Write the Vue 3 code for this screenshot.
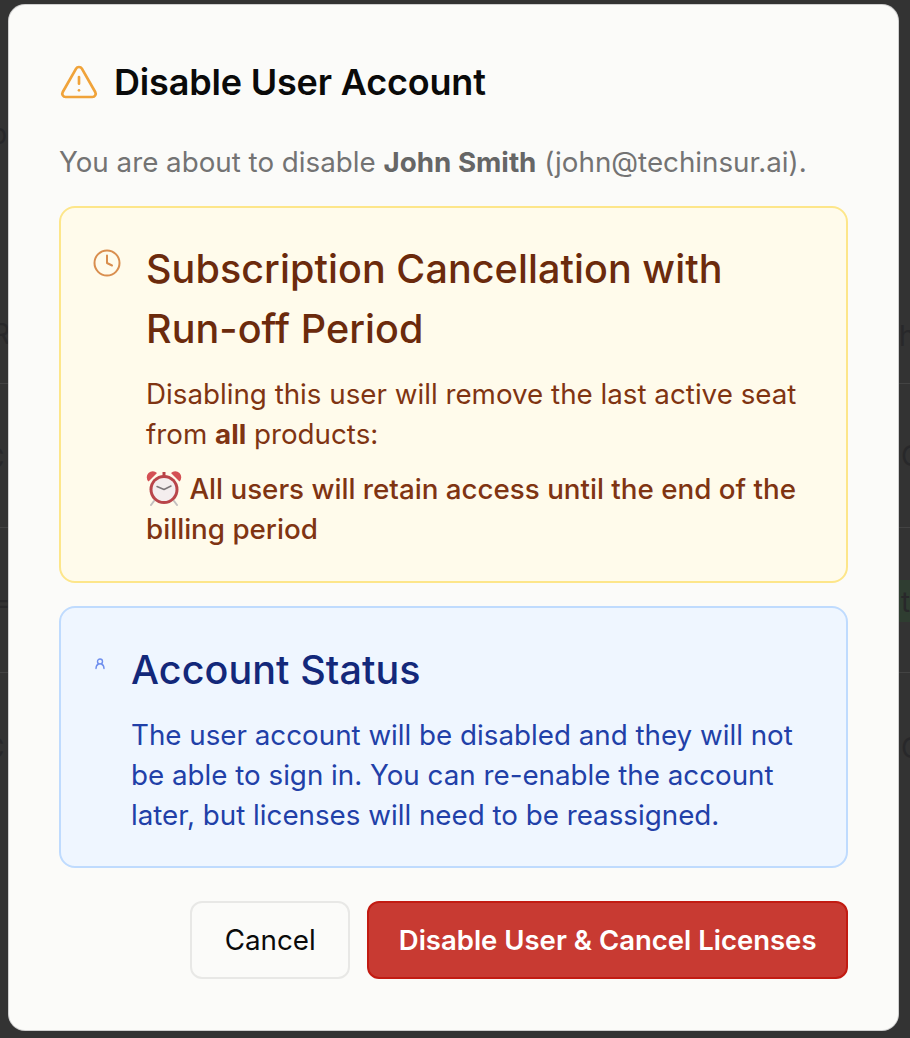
<script setup>
// static dialog, nothing to wire up
</script>

<template>
	<div class="page">
		<div class="backdrop">
			<span class="ghost ghost-b">b</span>
			<span class="ghost ghost-r">R</span>
			<span class="ghost ghost-h">h</span>
			<span class="ghost ghost-c1">C</span>
			<span class="ghost ghost-c2">C</span>
			<span class="ghost ghost-l1">C</span>
			<span class="ghost ghost-l2">C</span>
			<span class="ghost ghost-eq">=</span>
			<div class="ghost-line line-1"></div>
			<div class="ghost-line line-2"></div>
			<div class="ghost-line line-3"></div>
			<div class="ghost-pill"><span class="ghost-t">t</span></div>
		</div>

		<section class="dialog">
			<header class="dialog-header">
				<svg class="warn-icon" viewBox="0 0 24 24" fill="none" stroke="currentColor" stroke-width="1.6" stroke-linecap="round" stroke-linejoin="round">
					<path d="M21.73 18l-8-14a2 2 0 0 0-3.48 0l-8 14A2 2 0 0 0 4 21h16a2 2 0 0 0 1.73-3Z" />
					<path d="M12 9v4" />
					<path d="M12 17h.01" />
				</svg>
				<h2>Disable User Account</h2>
			</header>

			<p class="intro">You are about to disable <strong>John Smith</strong> (john@techinsur.ai).</p>

			<div class="notice notice-amber">
				<svg class="clock-icon" viewBox="0 0 24 24" fill="none" stroke="currentColor" stroke-width="1.6" stroke-linecap="round" stroke-linejoin="round">
					<circle cx="12" cy="12" r="10" />
					<path d="M12 6v6l4 2" />
				</svg>
				<div class="notice-body">
					<h3>Subscription Cancellation with Run-off Period</h3>
					<p class="notice-lead">Disabling this user will remove the last active seat from <strong>all</strong> products:</p>
					<p class="notice-text">
						<svg class="alarm" viewBox="0 0 36 36">
							<path d="M8 31l-3 4M28 31l3 4" stroke="#c4c0c0" stroke-width="2" stroke-linecap="round" fill="none" />
							<path d="M2.500 11.500a6 6 0 0 1 8.500-8.500zM33.500 11.500a6 6 0 0 0-8.500-8.500z" fill="#d45054" />
							<path d="M16.500 2h3v4h-3z" fill="#b94044" />
							<circle cx="18" cy="19.500" r="14.500" fill="#b9454a" />
							<circle cx="18" cy="19.500" r="11.500" fill="#f4eeee" />
							<path d="M18 19.500l-7-3M18 19.500l7-3.500" stroke="#7d777a" stroke-width="1.500" stroke-linecap="round" fill="none" />
						</svg>
						All users will retain access until the end of the billing period
					</p>
				</div>
			</div>

			<div class="notice notice-blue">
				<svg class="user-icon" viewBox="0 0 24 24" fill="none" stroke="currentColor" stroke-width="2.800" stroke-linecap="round" stroke-linejoin="round">
					<circle cx="12" cy="8" r="5" />
					<path d="M4 22c0-5 3-8 5-9M20 22c0-5-3-8-5-9" />
				</svg>
				<div class="notice-body">
					<h3>Account Status</h3>
					<p class="notice-lead">The user account will be disabled and they will not be able to sign in. You can re-enable the account later, but licenses will need to be reassigned.</p>
				</div>
			</div>

			<footer class="dialog-actions">
				<button class="btn btn-cancel">Cancel</button>
				<button class="btn btn-danger">Disable User &amp; Cancel Licenses</button>
			</footer>
		</section>
	</div>
</template>

<style>
html,
body {
	margin: 0;
	background: #333333;
}
</style>

<style scoped>
.page {
	position: relative;
	width: 910px;
	height: 1038px;
	padding: 5px 12px 8px 9px;
	box-sizing: border-box;
	overflow: hidden;
	background: #333333;
	font-family: Inter, "Liberation Sans", sans-serif;
}

.backdrop {
	position: absolute;
	inset: 0;
	color: #28282a;
}

.ghost {
	position: absolute;
	font-size: 28px;
	line-height: 32px;
}

.ghost-b { left: -10px; top: 118px; }
.ghost-r { left: -8px; top: 318px; }
.ghost-h { left: 899px; top: 320px; }
.ghost-c1 { left: 901px; top: 440px; }
.ghost-c2 { left: 901px; top: 732px; }
.ghost-l1 { left: -16px; top: 442px; }
.ghost-l2 { left: -16px; top: 732px; }
.ghost-eq { left: -8px; top: 586px; }

.ghost-line {
	position: absolute;
	left: 0;
	right: 0;
	height: 1px;
	background: #434343;
}

.line-1 { top: 383px; }
.line-2 { top: 527px; }
.line-3 { top: 672px; }

.ghost-pill {
	position: absolute;
	left: 899px;
	top: 580px;
	width: 11px;
	height: 42px;
	background: #2f3d31;
}

.ghost-t {
	position: absolute;
	left: 2px;
	top: 6px;
	font-size: 28px;
	line-height: 32px;
}

.dialog {
	position: relative;
	height: 100%;
	padding: 54px 50px 0;
	box-sizing: border-box;
	background: #fbfbf9;
	border-radius: 16px;
	box-shadow: 0 0 0 1px #cfcfcf;
}

.dialog-header {
	display: flex;
	align-items: center;
	gap: 15px;
	height: 46px;
}

.warn-icon {
	width: 40px;
	height: 40px;
	color: #f0a33a;
	flex-shrink: 0;
}

.dialog-header h2 {
	margin: 0;
	font-size: 36px;
	letter-spacing: -0.18px;
	font-weight: 600;
	color: #0a0a0a;
}

.intro {
	margin: 37px 0 24px;
	font-size: 27.75px;
	line-height: 40px;
	color: #737373;
}

.intro strong {
	color: #666666;
	font-weight: 700;
}

.notice {
	display: flex;
	border-radius: 16px;
	border: 2px solid;
	box-sizing: border-box;
}

.notice-amber {
	height: 377px;
	padding: 31px 32px 0;
	gap: 24px;
	background: #fffbeb;
	border-color: #fde68a;
	color: #7f3412;
}

.notice-blue {
	height: 262px;
	margin-top: 23px;
	padding: 32px 32px 0;
	gap: 21px;
	background: #eff6ff;
	border-color: #bfdbfe;
	color: #2140a8;
}

.clock-icon {
	width: 30px;
	height: 30px;
	margin: 9px 0 0 -1px;
	flex-shrink: 0;
	color: #d98e4e;
}

.user-icon {
	width: 12px;
	height: 15px;
	margin: 16px 4px 0 1px;
	flex-shrink: 0;
	color: #6f8fee;
}

.notice-body {
	flex: 1;
	min-width: 0;
}

.notice h3 {
	margin: 0 0 15px;
	font-size: 39.5px;
	letter-spacing: 0.07px;
	line-height: 60px;
	font-weight: 500;
}

.notice-amber h3 {
	color: #6b2a0c;
}

.notice-blue h3 {
	color: #13287a;
}

.notice-lead,
.notice-text {
	margin: 0;
	font-size: 27.75px;
	line-height: 40px;
}

.notice-text {
	font-weight: 500;
}

.notice-lead {
	margin-bottom: 15px;
}

.notice-lead strong {
	font-weight: 700;
}

.alarm {
	width: 36px;
	height: 36px;
	vertical-align: -7px;
}

.dialog-actions {
	display: flex;
	justify-content: flex-end;
	gap: 17px;
	margin-top: 33px;
}

.btn {
	height: 78px;
	box-sizing: border-box;
	border-radius: 12px;
	font-family: inherit;
}

.btn-cancel {
	padding: 0 32.5px;
	border: 2px solid #e8e8e6;
	background: #fbfbf9;
	color: #0a0a0a;
	font-size: 27.75px;
	font-weight: 400;
}

.btn-danger {
	padding: 0 29.5px;
	border: 2px solid #c21b12;
	background: #c83a32;
	color: #ffffff;
	font-size: 27.5px;
	font-weight: 600;
}
</style>
